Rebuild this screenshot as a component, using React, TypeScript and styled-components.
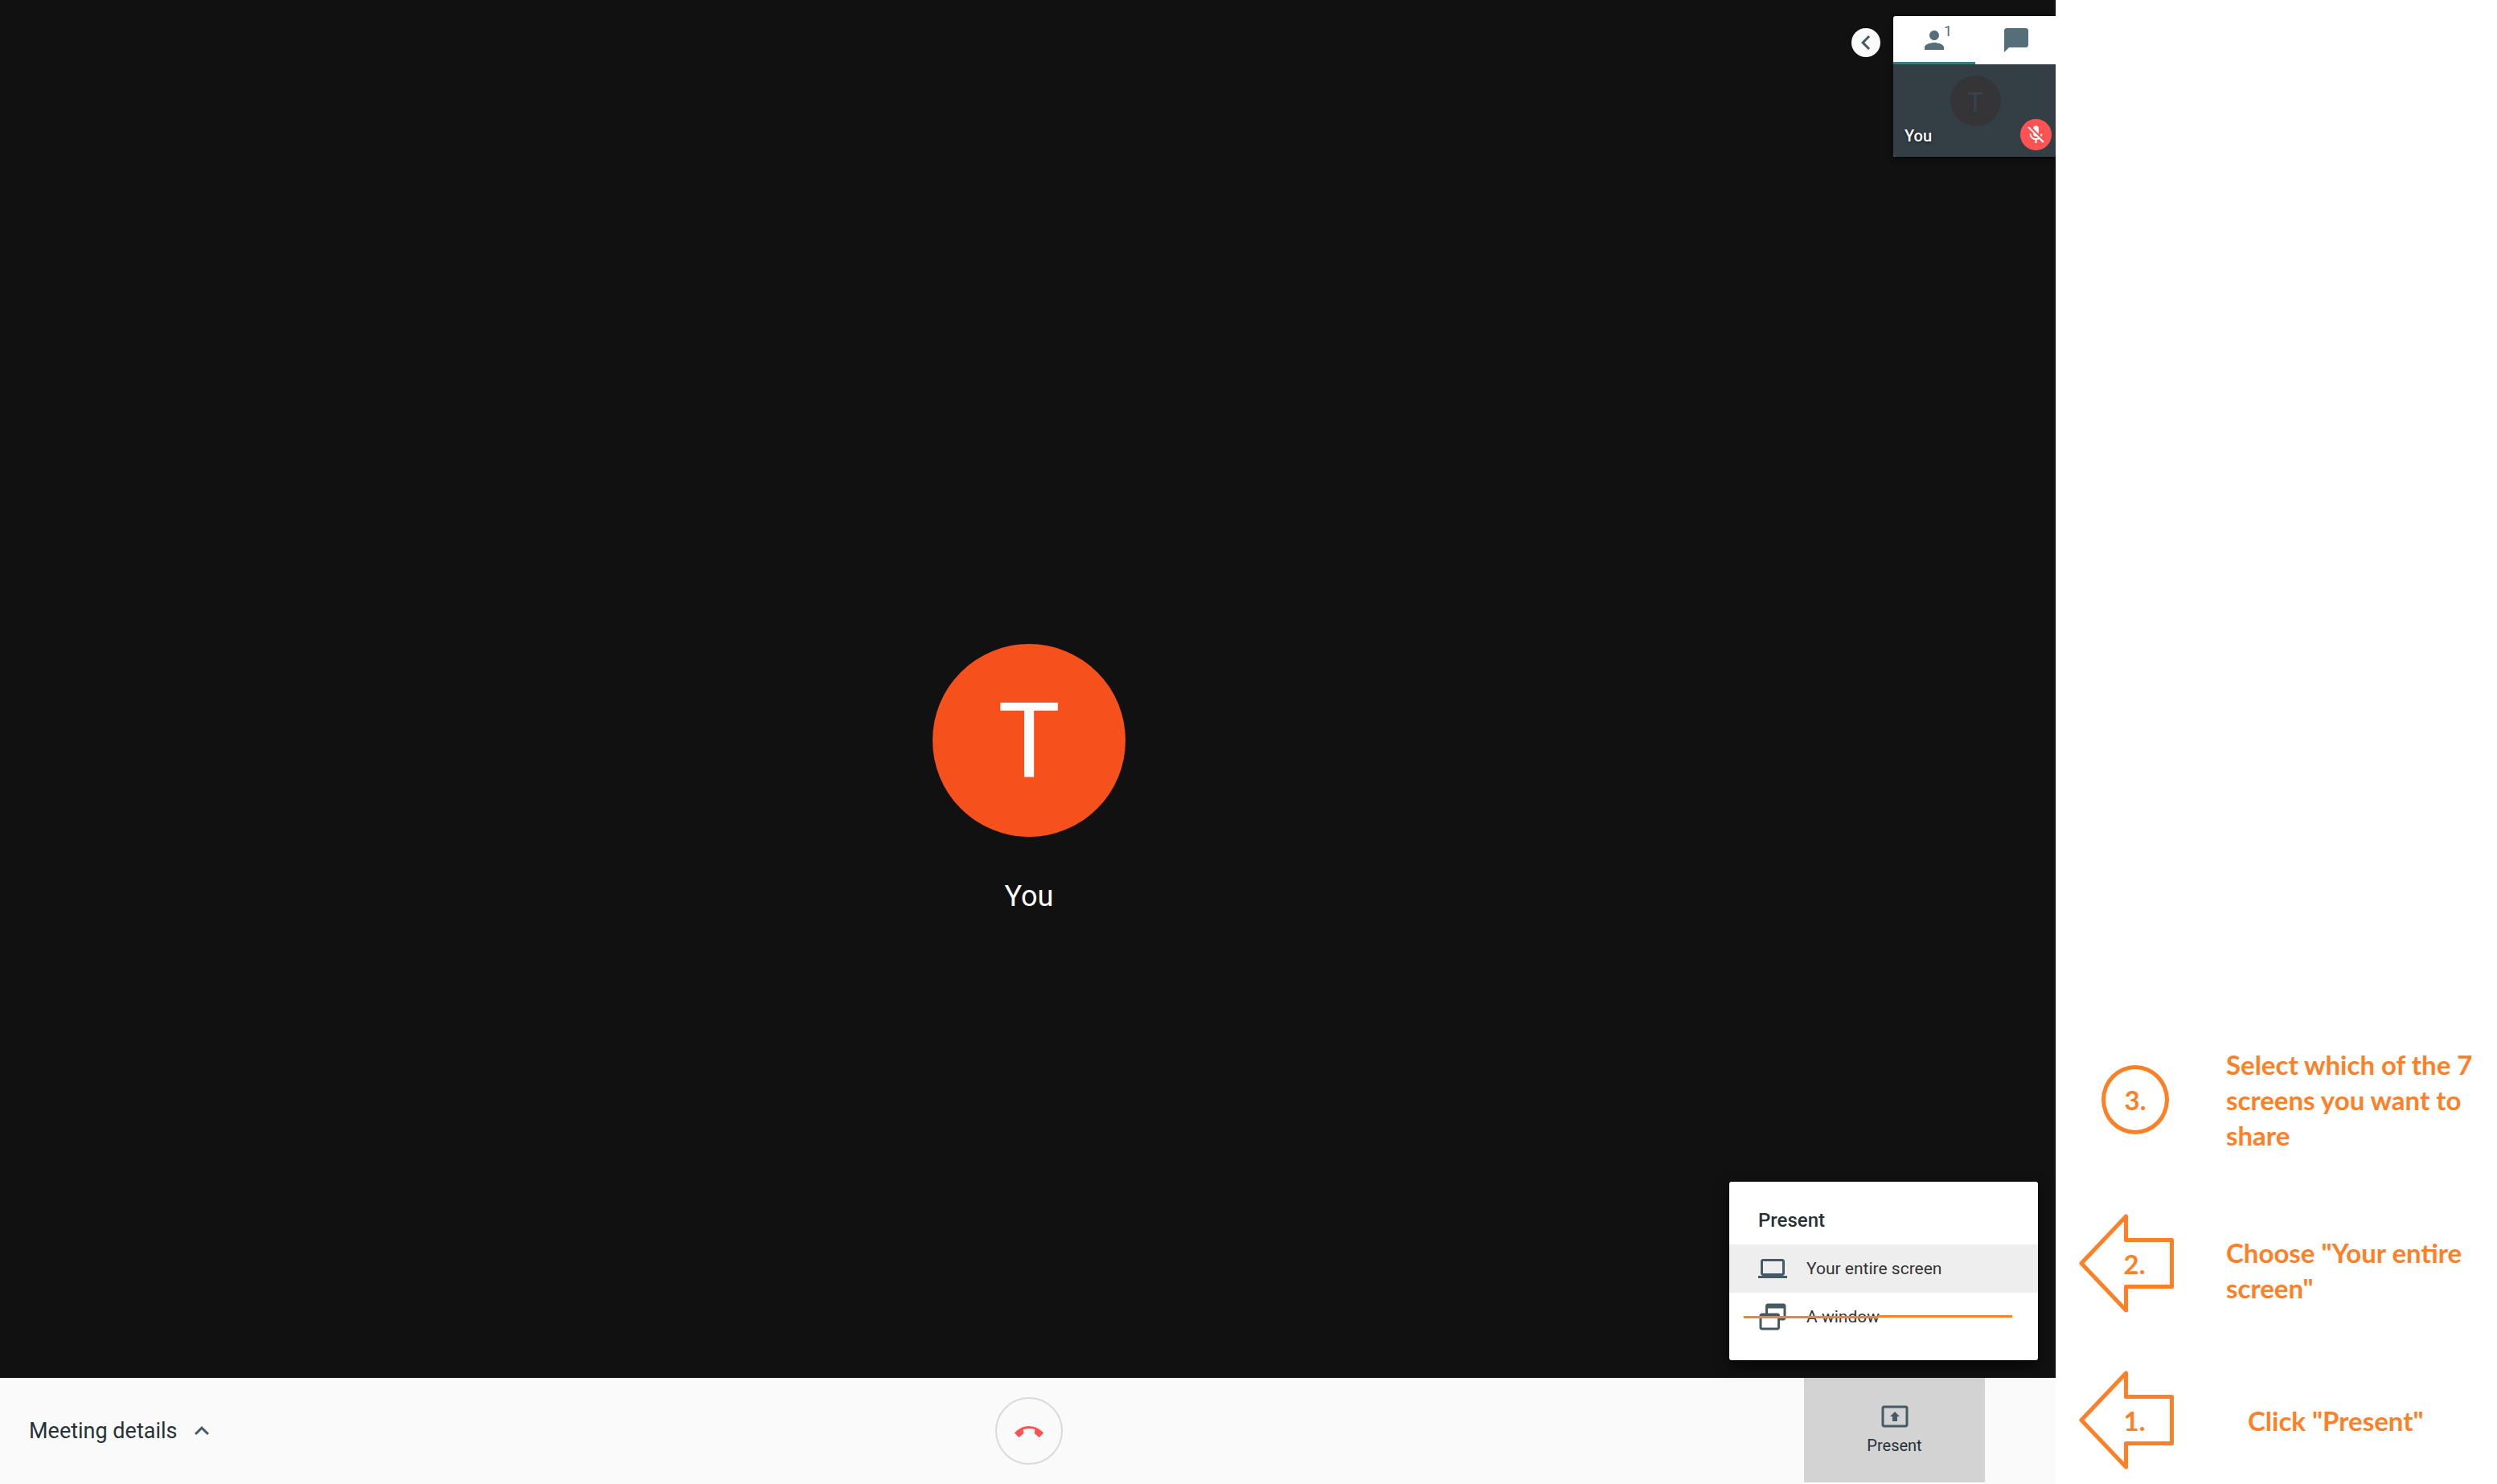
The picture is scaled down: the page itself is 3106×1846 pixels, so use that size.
import React from 'react';
import styled, { createGlobalStyle } from 'styled-components';

const ORANGE = '#ff7f27';
const SLATE = '#455a64';
const INK = '#263238';

const GlobalStyle = createGlobalStyle`
  * { box-sizing: border-box; }
  body { margin: 0; background: #fff; font-family: Roboto, "Liberation Sans", sans-serif; }
  button { border: 0; margin: 0; padding: 0; background: none; font: inherit; color: inherit; cursor: pointer; }
  svg { display: block; flex: none; }
`;

const Page = styled.div`
  display: flex;
  min-height: 100vh;
`;

const Meeting = styled.main`
  flex: 1;
  min-width: 0;
  display: flex;
  overflow: hidden;
  background: #111;
`;

const Call = styled.div`
  flex: none;
  width: calc(100% + 3px);
  display: flex;
  flex-direction: column;
`;

const Stage = styled.section`
  position: relative;
  flex: 1;
  display: flex;
  flex-direction: column;
  align-items: center;
  justify-content: center;
  gap: 52px;
  padding-top: 224px;
`;

const Avatar = styled.div<{ $size: number; $font: number; $bg: string; $fg: string }>`
  width: ${p => p.$size}px;
  height: ${p => p.$size}px;
  padding-top: 2px;
  display: flex;
  align-items: center;
  justify-content: center;
  border-radius: 50%;
  background: ${p => p.$bg};
  color: ${p => p.$fg};
  font-size: ${p => p.$font}px;
  line-height: 1;
`;

const SpeakerName = styled.div`
  font-size: 36px;
  line-height: 44px;
  color: #fff;
`;

const PeopleDock = styled.aside`
  position: absolute;
  top: 20px;
  right: 1px;
  display: flex;
  align-items: flex-start;
  gap: 16px;
`;

const Collapse = styled.button`
  width: 36px;
  height: 36px;
  margin-top: 15px;
  border-radius: 50%;
  background: #fafafa;
  color: ${SLATE};
`;

const PeoplePanel = styled.div`
  width: 204px;
  border-radius: 3px;
  overflow: hidden;
  background: #fff;
  box-shadow: 0 3px 6px rgba(0, 0, 0, 0.5);
`;

const Tabs = styled.div`
  display: grid;
  grid-template-columns: 1fr 1fr;
  height: 60px;
`;

const Tab = styled.button<{ $active?: boolean }>`
  position: relative;
  display: flex;
  align-items: center;
  justify-content: center;
  color: #546e7a;
  box-shadow: ${p => (p.$active ? 'inset 0 -3px #009688' : 'none')};
`;

const TabCount = styled.span`
  position: absolute;
  top: 9px;
  left: 63px;
  font-size: 18px;
  line-height: 20px;
`;

const Tile = styled.div`
  position: relative;
  height: 115px;
  padding-top: 14px;
  display: flex;
  justify-content: center;
  align-items: flex-start;
  background: #343e45;
`;

const TileFooter = styled.div`
  position: absolute;
  inset: auto 7px 8px 14px;
  display: flex;
  align-items: center;
  justify-content: space-between;
  color: #fff;
  font-size: 20px;
  font-weight: 500;
  line-height: 24px;
  text-shadow: 0 1px 3px rgba(0, 0, 0, 0.7);

  span { padding-top: 2px; }
`;

const MicBadge = styled.button`
  width: 39px;
  height: 39px;
  display: flex;
  align-items: center;
  justify-content: center;
  border-radius: 50%;
  background: #ff5252;
  color: #fff;
`;

const Menu = styled.div`
  position: absolute;
  right: 25px;
  bottom: 22px;
  width: 384px;
  padding: 24px 0;
  border-radius: 3px;
  background: #fff;
  box-shadow: 0 8px 18px rgba(0, 0, 0, 0.6);
`;

const MenuTitle = styled.h2`
  margin: 0;
  padding: 8px 36px 14px;
  font-size: 24px;
  font-weight: 500;
  line-height: 32px;
  color: ${INK};
`;

const MenuItem = styled.button<{ $active?: boolean }>`
  position: relative;
  width: 100%;
  height: 60px;
  padding: 0 36px;
  display: flex;
  align-items: center;
  gap: 24px;
  background: ${p => (p.$active ? '#eee' : '#fff')};
  color: ${SLATE};
  font-size: 21px;
  line-height: 24px;

  span { color: #333; }
`;

const Strike = styled.svg`
  position: absolute;
  left: 18px;
  top: 28px;
`;

const Bar = styled.footer`
  display: grid;
  grid-template-columns: 1fr auto 1fr;
  align-items: center;
  height: 132px;
  background: #fafafa;
  color: ${INK};
`;

const Details = styled.button`
  justify-self: start;
  margin-left: 36px;
  display: flex;
  align-items: center;
  gap: 12px;
  font-size: 27px;
  line-height: 36px;

  svg { color: ${SLATE}; }
`;

const HangUp = styled.button`
  width: 84px;
  height: 84px;
  display: flex;
  align-items: center;
  justify-content: center;
  border: 2px solid #dadada;
  border-radius: 50%;
  color: #ff5252;
`;

const PresentButton = styled.button`
  justify-self: end;
  margin-right: 91px;
  width: 225px;
  height: 132px;
  padding-bottom: 4px;
  display: flex;
  flex-direction: column;
  align-items: center;
  justify-content: center;
  gap: 6px;
  border-bottom: 2px solid #fff;
  background: #d3d3d3;
  font-size: 20px;
  line-height: 24px;

  svg { color: ${SLATE}; }
`;

const Notes = styled.ol`
  flex: none;
  width: 549px;
  margin: 0;
  padding: 0 0 18px 29px;
  list-style: none;
  display: flex;
  flex-direction: column;
  justify-content: flex-end;
  background: #fff;
  color: ${ORANGE};
  font-family: Lato, "Open Sans", sans-serif;
  font-size: 33px;
  font-weight: 700;
  line-height: 44px;
`;

const Note = styled.li<{ $after?: number; $marker: number }>`
  display: grid;
  grid-template-columns: ${p => p.$marker}px 1fr;
  align-items: center;
  margin-bottom: ${p => p.$after ?? 0}px;
`;

const NoteText = styled.p<{ $lowered?: boolean }>`
  margin: 0;
  padding-top: ${p => (p.$lowered ? 16 : 0)}px;
  max-width: 328px;
`;

const Marker = styled.div<{ $round?: boolean }>`
  position: relative;
  width: ${p => (p.$round ? 84 : 118)}px;
  height: ${p => (p.$round ? 86 : 123)}px;
  margin-left: ${p => (p.$round ? 28 : 0)}px;
  display: flex;
  align-items: center;
  justify-content: center;
  border: ${p => (p.$round ? `5px solid ${ORANGE}` : 0)};
  border-radius: ${p => (p.$round ? '50%' : 0)};
  padding-left: ${p => (p.$round ? 0 : 20)}px;

  svg { position: absolute; inset: 0; }
`;

const Icon = ({ d, size = 36 }: { d: string; size?: number }) => (
  <svg width={size} height={size} viewBox="0 0 24 24" fill="currentColor" fillRule="evenodd" aria-hidden="true">
    <path d={d} />
  </svg>
);

const icons = {
  left: 'M15.41 7.41L14 6l-6 6 6 6 1.41-1.41L10.83 12z',
  up: 'M12 8l-6 6 1.41 1.41L12 10.83l4.59 4.58L18 14z',
  person: 'M12 12c2.21 0 4-1.79 4-4s-1.79-4-4-4-4 1.79-4 4 1.79 4 4 4zm0 2c-2.67 0-8 1.34-8 4v2h16v-2c0-2.66-5.33-4-8-4z',
  chat: 'M20 2H4c-1.1 0-2 .9-2 2v18l4-4h14c1.1 0 2-.9 2-2V4c0-1.1-.9-2-2-2z',
  micOff:
    'M19 11h-1.7c0 .74-.16 1.43-.43 2.05l1.23 1.23c.56-.98.9-2.09.9-3.28zm-4.02.17c0-.06.02-.11.02-.17V5c0-1.66-1.34-3-3-3S9 3.34 9 5v.18l5.98 5.99zM4.27 3L3 4.27l6.01 6.01V11c0 1.66 1.33 3 2.99 3 .22 0 .44-.03.65-.08l1.66 1.66c-.71.33-1.5.52-2.31.52-2.76 0-5.3-2.1-5.3-5.1H5c0 3.41 2.72 6.23 6 6.72V21h2v-3.28c.91-.13 1.77-.45 2.54-.9L19.73 21 21 19.73 4.27 3z',
  laptop:
    'M20 18c1.1 0 1.99-.9 1.99-2L22 6c0-1.1-.9-2-2-2H4c-1.1 0-2 .9-2 2v10c0 1.1.9 2 2 2H0v2h24v-2h-4zM4 6h16v10H4V6z',
  windows:
    'M8 1h13c1.1 0 2 .9 2 2v10c0 1.1-.9 2-2 2h-3v6c0 1.1-.9 2-2 2H3c-1.1 0-2-.9-2-2V11c0-1.1.9-2 2-2h3V3c0-1.1.9-2 2-2zM8 5v4h8c1.1 0 2 .9 2 2v2h3V5zM3 13v8h13v-8z',
  present:
    'M21 3H3c-1.11 0-2 .89-2 2v14c0 1.11.89 2 2 2h18c1.11 0 2-.89 2-2V5c0-1.11-.89-2-2-2zm0 16.02H3V4.98h18v14.04zM10 12H8l4-4 4 4h-2v4h-4v-4z',
  hangUp: 'M12 8C7.4 8 3 10.2 0 13.6l3.5 3.7 3.8-2.9v-3.7c3-1 6.4-1 9.4 0v3.7l3.8 2.9 3.5-3.7C21 10.2 16.6 8 12 8z',
};

const ArrowMarker = ({ children }: { children: React.ReactNode }) => (
  <Marker>
    <svg width="118" height="123" viewBox="0 0 118 123" fill="none" stroke={ORANGE} strokeWidth="5" strokeLinejoin="round" aria-hidden="true">
      <path d="M3 61.500L58.500 3v29.500h57v58h-57V120z" />
    </svg>
    {children}
  </Marker>
);

export default function App() {
  return (
    <Page>
      <GlobalStyle />
      <Meeting>
        <Call>
          <Stage>
            <Avatar $size={240} $font={130} $bg="#f6511d" $fg="#fff">T</Avatar>
            <SpeakerName>You</SpeakerName>

            <PeopleDock>
              <Collapse aria-label="Collapse panel"><Icon d={icons.left} /></Collapse>
              <PeoplePanel>
                <Tabs>
                  <Tab $active aria-label="People">
                    <Icon d={icons.person} />
                    <TabCount>1</TabCount>
                  </Tab>
                  <Tab aria-label="Chat"><Icon d={icons.chat} /></Tab>
                </Tabs>
                <Tile>
                  <Avatar $size={63} $font={34} $bg="#353538" $fg="#37434a">T</Avatar>
                  <TileFooter>
                    <span>You</span>
                    <MicBadge aria-label="Microphone off"><Icon d={icons.micOff} size={27} /></MicBadge>
                  </TileFooter>
                </Tile>
              </PeoplePanel>
            </PeopleDock>

            <Menu>
              <MenuTitle>Present</MenuTitle>
              <MenuItem $active>
                <Icon d={icons.laptop} />
                <span>Your entire screen</span>
              </MenuItem>
              <MenuItem>
                <Icon d={icons.windows} />
                <span>A window</span>
                <Strike width="334" height="4" viewBox="0 0 334 4" fill={ORANGE} aria-hidden="true">
                  <path d="M0 1h167V0h167v3H167v1H0z" />
                </Strike>
              </MenuItem>
            </Menu>
          </Stage>

          <Bar>
            <Details>Meeting details<Icon d={icons.up} /></Details>
            <HangUp aria-label="Leave call"><Icon d={icons.hangUp} /></HangUp>
            <PresentButton>
              <Icon d={icons.present} />
              Present
            </PresentButton>
          </Bar>
        </Call>
      </Meeting>

      <Notes>
        <Note $marker={183} $after={76}>
          <Marker $round>3.</Marker>
          <NoteText>Select which of the 7 screens you want to share</NoteText>
        </Note>
        <Note $marker={183} $after={72}>
          <ArrowMarker>2.</ArrowMarker>
          <NoteText $lowered>Choose "Your entire screen"</NoteText>
        </Note>
        <Note $marker={210}>
          <ArrowMarker>1.</ArrowMarker>
          <NoteText>Click "Present"</NoteText>
        </Note>
      </Notes>
    </Page>
  );
}
